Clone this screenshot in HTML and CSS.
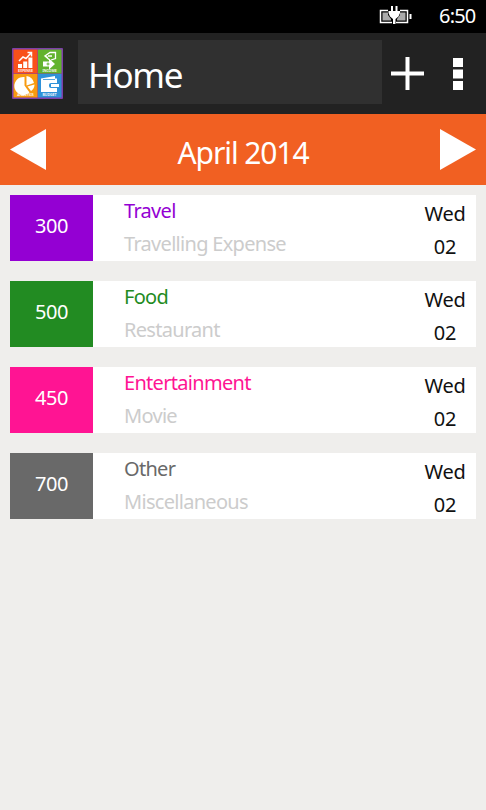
FILE: index.html
```html
<!DOCTYPE html>
<html lang="en">
<head>
<meta charset="utf-8">
<title>Home</title>
<link rel="stylesheet" href="styles.css">
</head>
<body>
<div class="status">
  <svg class="battery" width="34" height="20" viewBox="0 0 34 20">
    <path d="M9 4.500H1.500v12H13M21 4.500h7.500v12H17" fill="none" stroke="#fff" stroke-width="1.500"/>
    <path d="M3.500 6.500H9V9l3 4v1.500H3.500zM21 6.500h5.500v8H18V13l3-4z" fill="#aaa"/>
    <path d="M30.500 8h2v5h-2z" fill="#fff"/>
    <path d="M9.500 5H12V0h2v5h2.500V0h2v5H21v2l-1.500 3.500-3 2.500V18H14v-5l-3-2.500L9.500 7z" fill="#fff"/>
  </svg>
  <span class="clock">6:50</span>
</div>
<header class="header">
  <svg class="logo" width="51" height="51" viewBox="0 0 51 51">
    <rect width="51" height="51" rx="1" fill="#7d3fa8"/>
    <path fill="#f9501a" d="M1.500 1.500h24v24h-24z"/>
    <path fill="#63b32e" d="M26 1.500h23.500v24H26z"/>
    <path fill="#f79a10" d="M1.500 26h24v23.500h-24z"/>
    <path fill="#2f91d8" d="M26 26h23.500v23.500H26z"/>
    <path fill="#fff" d="M6 16h4v4H6zM11.200 13.500h4V20h-4zM16.400 9.500h4V20h-4z"/>
    <path d="M7 13l4-4 3 1.500L19 5M15.500 4.500h4v4" fill="none" stroke="#fff" stroke-width="1.500"/>
    <path fill="#fff" d="M31 13.500h6v-3l6 5.500-6 5.500v-3h-6z"/>
    <path d="M36 9.500l-3-1.500 5-3.500h5.500v6L39 12M33 8l4 3.500M36 8h4" fill="none" stroke="#fff" stroke-width="1.300"/>
    <path d="M36 14.500v3M34.500 16h3" stroke="#63b32e"/>
    <path fill="#fff" d="M12.500 29v8.500l5 7A9 9 0 1 1 12.500 29zM14.500 28a9 9 0 0 1 7.500 7l-7.500 2.500zM22.500 36.500a8 8 0 0 1-3.500 6.500l-3.500-4.500z"/>
    <path fill="#fff" d="M29 30.500l14-2.500v2.500h2V35h-6q-2 0-2 2v1q0 2 2 2h6v4H29z"/>
    <path fill="#fff" d="M39 36h8v3h-8z"/>
    <path d="M31 31.500h12" stroke="#2f91d8" stroke-width=".8"/>
    <g class="logo-label" fill="#fff" text-anchor="middle">
      <text x="13.500" y="24">EXPENSE</text>
      <text x="37.500" y="24">INCOME</text>
      <text x="13.500" y="48">ANALYSIS</text>
      <text x="37.500" y="48">BUDGET</text>
    </g>
  </svg>
  <h1 class="title">Home</h1>
  <svg class="plus" width="33" height="33" viewBox="0 0 33 33"><path d="M0 16.500h33M16.500 0v33" stroke="#fff" stroke-width="4"/></svg>
  <svg class="more" width="10" height="33" viewBox="0 0 10 33"><path d="M0 0h10v9H0zM0 11.500h10v9H0zM0 23h10v9H0z" fill="#fff"/></svg>
</header>
<nav class="month">
  <svg width="36" height="41" viewBox="0 0 36 41"><path d="M0 20.500L36 0v41z" fill="#fff"/></svg>
  <span class="month-name">April 2014</span>
  <svg width="36" height="41" viewBox="0 0 36 41"><path d="M36 20.500L0 0v41z" fill="#fff"/></svg>
</nav>
<main class="list">
  <article class="row travel">
    <div class="amount">300</div>
    <div class="info"><div class="category">Travel</div><div class="note">Travelling Expense</div></div>
    <div class="date"><div class="day">Wed</div><div>02</div></div>
  </article>
  <article class="row food">
    <div class="amount">500</div>
    <div class="info"><div class="category">Food</div><div class="note">Restaurant</div></div>
    <div class="date"><div class="day">Wed</div><div>02</div></div>
  </article>
  <article class="row fun">
    <div class="amount">450</div>
    <div class="info"><div class="category">Entertainment</div><div class="note">Movie</div></div>
    <div class="date"><div class="day">Wed</div><div>02</div></div>
  </article>
  <article class="row other">
    <div class="amount">700</div>
    <div class="info"><div class="category">Other</div><div class="note">Miscellaneous</div></div>
    <div class="date"><div class="day">Wed</div><div>02</div></div>
  </article>
</main>
</body>
</html>
```
FILE: styles.css
```css
* { box-sizing: border-box; }
body {
  margin: 0;
  height: 810px;
  overflow: hidden;
  background: #efeeec;
  font-family: "Noto Sans", "Open Sans", sans-serif;
  font-size: 20px;
}
svg { display: block; flex: none; }
.status {
  display: flex;
  justify-content: flex-end;
  height: 33px;
  padding-right: 10px;
  background: #000;
  color: #fff;
}
.battery { margin: 6px 26px 0 0; }
.clock { width: 37px; line-height: 32px; letter-spacing: -0.8px; white-space: nowrap; }
.header {
  display: flex;
  height: 81px;
  padding: 7px 0 0 12px;
  background: #222;
}
.logo { margin-top: 8px; }
.logo-label { font-size: 3.5px; font-weight: 600; }
.title {
  width: 304px;
  height: 64px;
  margin: 0 0 0 15px;
  padding-left: 10px;
  background: #303030;
  color: #fff;
  font-size: 35px;
  font-weight: 400;
  line-height: 69px;
  letter-spacing: -1.4px;
}
.plus { margin: 17px 0 0 9px; }
.more { margin: 18px 0 0 29px; }
.month {
  display: flex;
  justify-content: space-between;
  height: 71px;
  padding: 15px 10px 0;
  background: #f16022;
  color: #fff;
}
.month-name { margin-top: -15px; font-size: 30px; line-height: 77px; letter-spacing: -1.1px; }
.list { display: flex; flex-direction: column; gap: 20px; padding: 10px; }
.row { display: flex; height: 66px; background: #fff; }
.amount {
  width: 83px;
  background: var(--accent);
  color: #fff;
  line-height: 62px;
  text-align: center;
  letter-spacing: -0.5px;
}
.info { flex: 1; margin-top: -1px; padding-left: 31px; line-height: 33px; letter-spacing: -0.7px; }
.category { color: var(--accent); }
.note { color: #ccc; }
.date { width: 62px; padding-top: 2px; color: #111; line-height: 33px; text-align: center; letter-spacing: -0.3px; }
.travel { --accent: #9400d3; }
.food { --accent: #228b22; }
.fun { --accent: #ff1493; }
.other { --accent: #696969; }
```
